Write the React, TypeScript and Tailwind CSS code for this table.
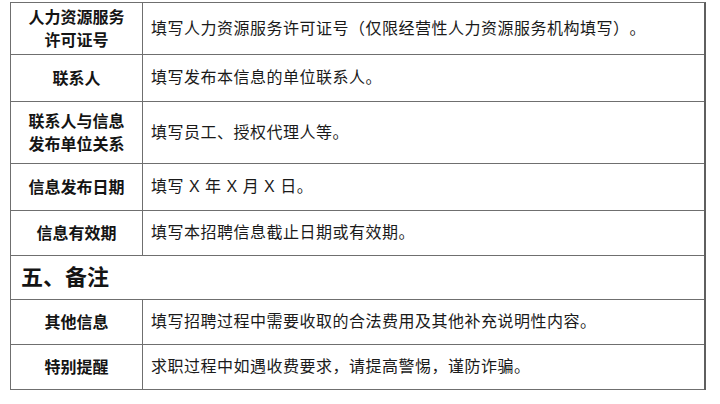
import React from 'react';

interface Row {
  label: string[];
  value: string;
  height: string;
}

const topRows: Row[] = [
  { label: ['人力资源服务', '许可证号'], value: '填写人力资源服务许可证号（仅限经营性人力资源服务机构填写）。', height: 'h-[52px]' },
  { label: ['联系人'], value: '填写发布本信息的单位联系人。', height: 'h-[47px]' },
  { label: ['联系人与信息', '发布单位关系'], value: '填写员工、授权代理人等。', height: 'h-[62px]' },
  { label: ['信息发布日期'], value: '填写 X 年 X 月 X 日。', height: 'h-[47px]' },
  { label: ['信息有效期'], value: '填写本招聘信息截止日期或有效期。', height: 'h-[45px]' },
];

const bottomRows: Row[] = [
  { label: ['其他信息'], value: '填写招聘过程中需要收取的合法费用及其他补充说明性内容。', height: 'h-[45px]' },
  { label: ['特别提醒'], value: '求职过程中如遇收费要求，请提高警惕，谨防诈骗。', height: 'h-[45px]' },
];

const font = "font-['Liberation_Sans','Noto_Sans_CJK_SC',sans-serif]";

const TableRow = ({ row }: { row: Row }) => (
  <div className={`flex border-b border-[#6f6f6f] ${row.height}`}>
    <div className="w-[132px] shrink-0 border-r border-[#6f6f6f] flex flex-col items-center justify-center font-bold text-[16px] leading-[23px] text-[#141414]">
      {row.label.map((l) => (
        <span key={l}>{l}</span>
      ))}
    </div>
    <div className="flex-1 flex items-center pl-[8px] text-[16px] tracking-[0.5px] text-[#1a1a1a]">
      {row.value}
    </div>
  </div>
);

export default function App() {
  return (
    <div className={`w-[720px] h-[404px] bg-white pt-[2px] pl-[10px] [text-spacing-trim:space-all] ${font}`}>
      <div className="w-[696px] border-l border-t border-r-2 border-[#6f6f6f] border-r-[#5f5f5f]">
        {topRows.map((r) => (
          <TableRow key={r.value} row={r} />
        ))}
        <div className="h-[44px] border-b border-[#6f6f6f] flex items-center pl-[10px] text-[22px] font-bold text-[#141414]">
          五、备注
        </div>
        {bottomRows.map((r) => (
          <TableRow key={r.value} row={r} />
        ))}
      </div>
    </div>
  );
}
